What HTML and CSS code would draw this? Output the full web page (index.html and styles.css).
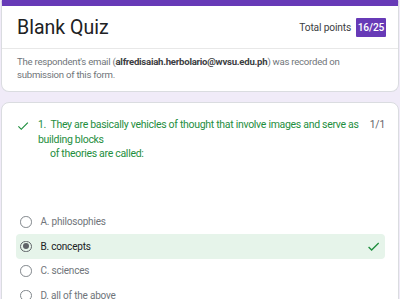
FILE: index.html
```html
<!DOCTYPE html>
<html>
<head>
<meta charset="utf-8">
<link rel="stylesheet" href="styles.css">
</head>
<body>
<div class="page">
  <section class="card header-card">
    <div class="head-top">
      <h1 class="title">Blank Quiz</h1>
      <div class="points">
        <span class="points-label">Total points</span>
        <span class="badge">16/25</span>
      </div>
    </div>
    <div class="email-note">
      The respondent's email (<b>alfredisaiah.herbolario@wvsu.edu.ph</b>) was recorded on submission of this form.
    </div>
  </section>

  <section class="card question-card">
    <div class="q-head">
      <svg class="q-check" viewBox="0 0 24 24"><path d="M9 16.17L4.83 12l-1.42 1.41L9 19 21 7l-1.41-1.41z"/></svg>
      <div class="q-text">1.&nbsp; They are basically vehicles of thought that involve images and serve as building blocks<br><span class="indent">of theories are called:</span></div>
      <div class="q-score">1/1</div>
    </div>
    <ul class="options">
      <li class="option"><span class="radio"></span><span class="opt-label">A. philosophies</span></li>
      <li class="option correct"><span class="radio checked"></span><span class="opt-label">B. concepts</span>
        <svg class="opt-check" viewBox="0 0 24 24"><path d="M9 16.17L4.83 12l-1.42 1.41L9 19 21 7l-1.41-1.41z"/></svg></li>
      <li class="option"><span class="radio"></span><span class="opt-label">C. sciences</span></li>
      <li class="option"><span class="radio"></span><span class="opt-label">D. all of the above</span></li>
    </ul>
  </section>
</div>
</body>
</html>
```

FILE: styles.css
```css
html, body {
  margin: 0;
  padding: 0;
}
body {
  background: #f0ebf8;
  font-family: Roboto, "Liberation Sans", Arial, sans-serif;
  width: 400px;
  height: 299px;
  overflow: hidden;
}
.page {
  padding: 0 1px;
  display: flex;
  flex-direction: column;
  gap: 10px;
}
.card {
  background: #fff;
  border: 1px solid #dadce0;
  border-radius: 8px;
}
.header-card {
  margin-top: -4px;
  border-top: 10px solid #673ab7;
}
.head-top {
  height: 42px;
  display: flex;
  align-items: center;
  justify-content: space-between;
  padding: 0 12px 0 15px;
  border-bottom: 1px solid #e8e8e8;
}
.title {
  margin: 0;
  font-size: 19.5px;
  font-weight: 400;
  color: #202124;
  padding-top: 1px;
}
.points {
  display: flex;
  align-items: center;
  gap: 5px;
}
.points-label {
  font-size: 10.2px;
  letter-spacing: -0.15px;
  color: #3c4043;
}
.badge {
  background: #673ab7;
  color: #fff;
  font-size: 10.2px;
  font-weight: 500;
  letter-spacing: -0.1px;
  width: 30px;
  height: 19px;
  display: flex;
  align-items: center;
  justify-content: center;
  border-radius: 1px;
}
.email-note {
  padding: 7px 15px 10px;
  font-size: 9.6px;
  letter-spacing: -0.25px;
  line-height: 12.5px;
  color: #70757a;
}
.email-note b {
  color: #3c4043;
  font-weight: 700;
}
.question-card {
  height: 230px;
}
.q-head {
  display: flex;
  align-items: flex-start;
  padding: 15px 13px 0 14px;
}
.q-check {
  width: 14px;
  height: 14px;
  fill: #1e8e3e;
  flex: none;
  margin: 1px 8px 0 0;
}
.q-text {
  flex: 1;
  font-size: 10.5px;
  letter-spacing: -0.3px;
  line-height: 14.5px;
  color: #1e8e3e;
}
.indent {
  padding-left: 12px;
}
.q-score {
  font-size: 10.2px;
  letter-spacing: -0.15px;
  line-height: 14.5px;
  color: #5f6368;
  margin-left: 4px;
}
.options {
  list-style: none;
  margin: 48px 0 0;
  padding: 0 13px 0 14px;
}
.option {
  height: 24.5px;
  display: flex;
  align-items: center;
  padding-left: 4px;
  border-radius: 4px;
}
.option.correct {
  background: #e6f4ea;
}
.radio {
  width: 9.5px;
  height: 9.5px;
  border: 1.25px solid #80868b;
  border-radius: 50%;
  flex: none;
  display: flex;
  align-items: center;
  justify-content: center;
}
.radio.checked {
  border-color: #5f6368;
}
.radio.checked::after {
  content: "";
  width: 6px;
  height: 6px;
  border-radius: 50%;
  background: #5f6368;
}
.opt-label {
  margin-left: 9px;
  font-size: 10px;
  letter-spacing: -0.2px;
  color: #70757a;
}
.correct .opt-label {
  color: #202124;
}
.opt-check {
  width: 15px;
  height: 15px;
  fill: #1e8e3e;
  margin-left: auto;
  margin-right: 4px;
}
```
